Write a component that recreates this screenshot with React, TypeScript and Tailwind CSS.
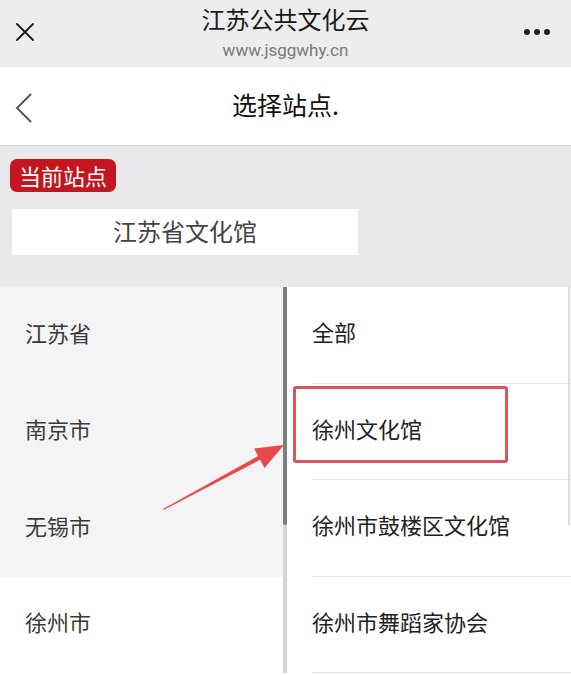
import React from 'react';

const provinces = ['江苏省', '南京市', '无锡市', '徐州市'];
const sites = ['全部', '徐州文化馆', '徐州市鼓楼区文化馆', '徐州市舞蹈家协会'];

const App: React.FC = () => {
  return (
    <div
      className="relative w-[571px] h-[675px] overflow-hidden bg-white"
      style={{ fontFamily: '"Noto Sans CJK SC", "Noto Sans", sans-serif' }}
    >
      {/* WeChat top bar */}
      <div className="relative h-[67px] bg-[#ededed] flex flex-col items-center">
        <div className="mt-[4px] text-[24px] leading-[30px] text-[#1b1b1b]">江苏公共文化云</div>
        <div className="mt-[6px] text-[17px] leading-[20px] text-[#7a7a7a]" style={{ fontFamily: 'Roboto, "Liberation Sans", sans-serif' }}>
          www.jsggwhy.cn
        </div>
        <svg className="absolute left-[15px] top-[22px]" width="20" height="20" viewBox="0 0 20 20">
          <path d="M2 2L18 18M18 2L2 18" stroke="#222" strokeWidth="2" strokeLinecap="round" />
        </svg>
        <div className="absolute right-[21px] top-[29px] flex gap-[4px]">
          <span className="w-[6px] h-[6px] rounded-full bg-[#222]" />
          <span className="w-[6px] h-[6px] rounded-full bg-[#222]" />
          <span className="w-[6px] h-[6px] rounded-full bg-[#222]" />
        </div>
      </div>

      {/* Page header */}
      <div className="relative h-[79px] flex items-center justify-center border-b border-[#d9d9dc]">
        <svg className="absolute left-[14px] top-[25px]" width="20" height="32" viewBox="0 0 20 32">
          <path d="M17 2L3 16L17 30" fill="none" stroke="#555" strokeWidth="2" />
        </svg>
        <div className="text-[25px] pb-[3px] text-[#111]">选择站点.</div>
      </div>

      {/* Current site */}
      <div className="h-[141px] bg-[#e9e9ec] pt-[13px] px-[10px]">
        <span className="inline-block bg-[#c3161f] text-white text-[22px] leading-[33px] px-[9px] rounded-[7px]">
          当前站点
        </span>
        <div className="mt-[17px] ml-[2px] w-[346px] h-[46px] bg-white flex items-center justify-center pb-[3px] text-[24px] text-[#444]">
          江苏省文化馆
        </div>
      </div>

      {/* Lists */}
      <div className="flex">
        <div className="relative w-[287px]">
          {provinces.map((p, i) => (
            <div
              key={p}
              className={`h-[96.5px] flex items-center pl-[25px] pb-[6px] text-[22px] text-[#3a3a3a] ${i < 3 ? 'bg-[#f4f4f5]' : 'bg-white'}`}
            >
              {p}
            </div>
          ))}
          <div className="absolute right-0 top-0 w-[4px] h-full bg-[#d4d4d4]" />
          <div className="absolute right-0 top-0 w-[4px] h-[238px] bg-[#7c7c7c] rounded-b-[2px]" />
        </div>
        <div className="relative flex-1 pl-[25px]">
          {sites.map((s) => (
            <div key={s} className="h-[96.5px] flex items-center pb-[6px] border-b border-[#e6e6e6] text-[22px] text-[#222]">
              {s}
            </div>
          ))}
          <div className="absolute right-[1px] top-0 w-[2px] h-[238px] bg-[#dcdcdc]" />
        </div>
      </div>

      {/* Annotation overlay */}
      <div className="absolute left-[293px] top-[386px] w-[215px] h-[77px] border-[3px] border-[#e0535a] rounded-[3px]" />
      <svg className="absolute inset-0 pointer-events-none" width="571" height="675">
        <polygon points="163,509 163.5,509.9 262,458.8 260,455" fill="#e8474c" />
        <polygon points="284,445 264.5,467.9 254.1,448.5" fill="#e8474c" />
      </svg>
    </div>
  );
};

export default App;
